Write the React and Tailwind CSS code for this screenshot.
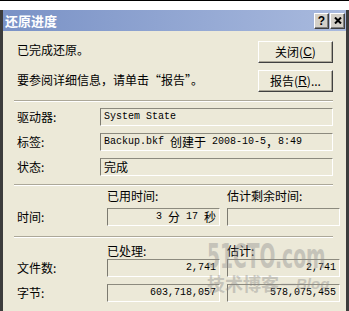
import React from 'react';

const CJK = "font-['Noto_Sans_CJK_SC','Noto_Sans_CJK_JP',sans-serif]";
const MONO = "font-['Liberation_Mono',monospace] text-[10px]";

// ASCII text in the fields is narrow (6px per char), like SimSun
const M = ({ children }) => <span className={`${MONO} whitespace-pre`}>{children}</span>;

function Field({ children, right, className = '' }) {
  return (
    <div
      className={`flex h-[18px] items-center overflow-hidden whitespace-nowrap border border-t-[#8c8a7e] border-l-[#7c7a70] border-b-white border-r-white px-[3px] leading-[16px] ${
        right ? 'justify-end' : ''
      } ${className}`}
    >
      {children}
    </div>
  );
}

function Button({ children }) {
  return (
    <div className="flex h-[22px] items-center justify-center border border-t-white border-l-white border-b-[#404040] border-r-[#404040] bg-[#ece9d8] leading-[14px] shadow-[inset_-1px_-1px_0_#aca899]">
      {children}
    </div>
  );
}

function Separator({ className = '' }) {
  return <div className={`-ml-[2px] h-[2px] border-t border-b border-t-[#aca899] border-b-white ${className}`} />;
}

function TitleButton({ children }) {
  return (
    <div className="flex h-[16px] w-[15px] items-center justify-center border border-t-white border-l-white border-b-[#404040] border-r-[#404040] bg-[#d4d0c8] shadow-[inset_-1px_-1px_0_#808080]">
      {children}
    </div>
  );
}

const infoRows = [
  { label: '驱动器:', value: <M>System State</M> },
  {
    label: '标签:',
    value: (
      <>
        <M>Backup.bkf </M>创建于<M> 2008-10-5</M>，<M>8:49</M>
      </>
    ),
  },
  { label: '状态:', value: '完成' },
];

export default function App() {
  return (
    <div className={`relative h-[311px] w-[349px] overflow-hidden border-t border-black bg-white pt-[9px] text-[12px] text-black ${CJK}`}>
      <div className="h-full border-l-[3px] border-r-[3px] border-l-[#3c3c3c] border-r-[#3c3c3c]">
        {/* Title bar */}
        <div className="flex h-[21px] items-center bg-gradient-to-r from-[#7a92c6] to-[#a9bade] pl-[2px] pr-[1px]">
          <span className="text-[13px] font-bold leading-none text-white">还原进度</span>
          <div className="ml-auto flex gap-[1px]">
            <TitleButton>
              <span className="font-['Liberation_Sans',sans-serif] text-[12px] font-bold leading-none">?</span>
            </TitleButton>
            <TitleButton>
              <svg width="8" height="7" viewBox="0 0 8 7">
                <path d="M1 0.5 L7 6.5 M7 0.5 L1 6.5" stroke="#000" strokeWidth="2" />
              </svg>
            </TitleButton>
          </div>
        </div>

        {/* Body */}
        <div className="h-full bg-[#ece9d8] pl-[13px] pr-[13px] pt-[10px]">
          <div className="flex">
            <div className="flex-1 pl-[1px]">
              <p className="mt-[2px] leading-[14px]">已完成还原。</p>
              <p className="mt-[16px] leading-[14px]">要参阅详细信息，请单击“报告”。</p>
            </div>
            <div className="flex w-[75px] flex-col gap-[7px]">
              <Button>
                关闭(<span className="font-['Liberation_Sans',sans-serif] underline">C</span>)
              </Button>
              <Button>
                报告(<span className="font-['Liberation_Sans',sans-serif] underline">R</span>)...
              </Button>
            </div>
          </div>

          <Separator className="mt-[8px]" />

          <div className="mt-[6px] flex flex-col gap-[7px]">
            {infoRows.map((row) => (
              <div key={row.label} className="flex items-center">
                <span className="w-[84px] pl-[1px]">{row.label}</span>
                <Field className="flex-1">{row.value}</Field>
              </div>
            ))}
          </div>

          <Separator className="mt-[8px]" />

          <div className="mt-[3px] grid grid-cols-[84px_113px_113px] gap-x-[7px] leading-[14px]">
            <span />
            <span>已用时间:</span>
            <span>估计剩余时间:</span>
          </div>
          <div className="mt-[5px] grid grid-cols-[84px_113px_113px] items-center gap-x-[7px]">
            <span className="pl-[1px]">时间:</span>
            <Field right>
              <M>3 </M>分<M> 17 </M>秒
            </Field>
            <Field />
          </div>

          <Separator className="mt-[10px]" />

          <div className="mt-[6px] grid grid-cols-[84px_113px_113px] gap-x-[7px] leading-[14px]">
            <span />
            <span>已处理:</span>
            <span>估计:</span>
          </div>
          <div className="mt-[1px] grid grid-cols-[84px_113px_113px] items-center gap-x-[7px] gap-y-[7px]">
            <span className="pl-[1px]">文件数:</span>
            <Field right>
              <M>2,741</M>
            </Field>
            <Field right>
              <M>2,741</M>
            </Field>
            <span className="pl-[1px]">字节:</span>
            <Field right>
              <M>603,718,057</M>
            </Field>
            <Field right>
              <M>578,075,455</M>
            </Field>
          </div>
        </div>
      </div>

      {/* Watermark */}
      <div className="pointer-events-none absolute left-[207px] top-[238px] w-[130px] text-[#8c8c8c] opacity-40">
        <div className="w-[230px] origin-left scale-x-[0.55] whitespace-nowrap font-['DejaVu_Sans',sans-serif] text-[34px] font-bold leading-[34px]">
          51CTO.com
        </div>
        <div className="-mt-[1px] flex items-end">
          <span className="text-[18px] font-bold leading-[22px]">技术博客</span>
          <span className="ml-[2px] font-['Liberation_Sans',sans-serif] text-[15px] font-bold italic leading-[20px]">
            —Blog
          </span>
        </div>
      </div>
    </div>
  );
}
